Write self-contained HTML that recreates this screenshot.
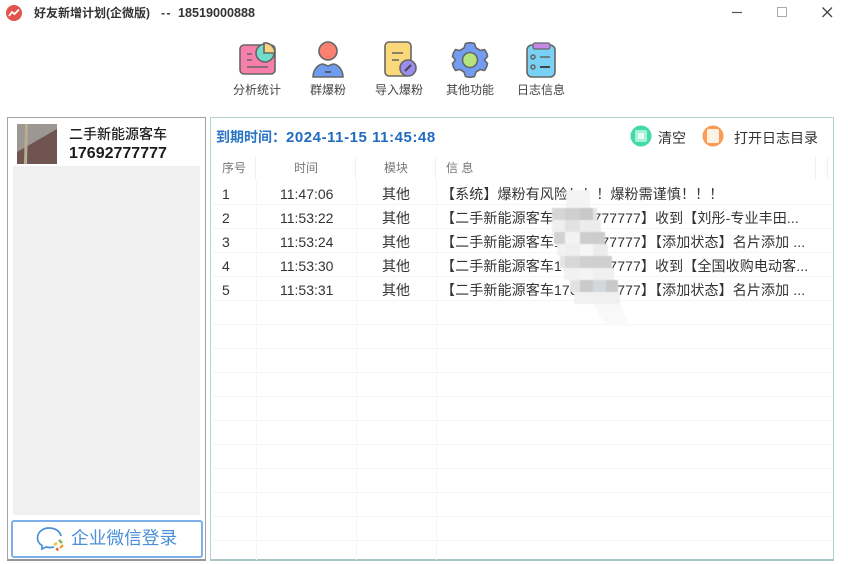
<!DOCTYPE html>
<html><head><meta charset="utf-8">
<style>
html,body{margin:0;padding:0;background:#fff}
#p{position:relative;width:848px;height:564px;overflow:hidden;background:#fff;font-family:"Liberation Sans","Noto Sans CJK SC",sans-serif;color:#333;filter:blur(.35px)}
#p div,#p svg{position:absolute}
.t{white-space:nowrap;line-height:1}
.lb{font-size:12px;color:#444;top:84px}
.h{font-size:12px;color:#777;top:162px}
.c{font-size:14px;color:#333}
.m{letter-spacing:.12px;left:441px}
.hl{background:#f0f0f0;width:1px}
.rl{background:#f4f6f6;height:1px;left:212px;width:619px}
.vl{background:#f5f6f6;width:1px;top:180px;height:380px}
</style></head><body><div id="p">

<svg style="left:5px;top:4px" width="18" height="18" viewBox="0 0 18 18"><circle cx="9" cy="9" r="8" fill="#e2534b"/><path d="M4 12l3-4 2.500 2L14 5.500" fill="none" stroke="#fff" stroke-width="1.800"/></svg>
<div class="t" style="left:34px;top:7px;font-size:12px;font-weight:bold;color:#333">好友新增计划(企微版)</div>
<div class="t" style="left:161px;top:7px;font-size:12px;font-weight:bold;letter-spacing:1.500px;color:#333">--</div>
<div class="t" style="left:178px;top:7px;font-size:12.600px;font-weight:bold;color:#333">18519000888</div>

<svg style="left:725px;top:0" width="123" height="26" viewBox="0 0 123 26"><path d="M7 12.500h10" stroke="#555" stroke-width="1.200"/><rect x="52.500" y="7.500" width="9" height="9" fill="none" stroke="#aaa" stroke-width="1"/><path d="M97.500 7.500l9.500 9.500M107 7.500l-9.500 9.500" stroke="#444" stroke-width="1.300"/></svg>

<svg style="left:238px;top:40px" width="40" height="38" viewBox="0 0 40 38"><rect x="2" y="5" width="35" height="29" rx="4" fill="#f77fa9" stroke="#666" stroke-width="1.600"/><circle cx="27" cy="13" r="9" fill="#72dccb" stroke="#666" stroke-width="1.600"/><path d="M26 3a10 10 0 0 1 11 10H26z" fill="#f9d47c" stroke="#666" stroke-width="1.600"/><path d="M9 14h5M9 20h5M9 27h21" stroke="#666" stroke-width="1.600"/></svg>
<div class="t lb" style="left:233px">分析统计</div>

<svg style="left:311px;top:40px" width="34" height="38" viewBox="0 0 34 38"><path d="M2 37c0-8 6-13 10-13l5 2 5-2c4 0 10 5 10 13z" fill="#6f9cf0" stroke="#666" stroke-width="1.600"/><circle cx="17" cy="11" r="9" fill="#fb8071" stroke="#666" stroke-width="1.600"/><path d="M14 32h6" stroke="#555" stroke-width="1.800"/></svg>
<div class="t lb" style="left:310px">群爆粉</div>

<svg style="left:383px;top:40px" width="36" height="38" viewBox="0 0 36 38"><rect x="2" y="2" width="26" height="34" rx="4" fill="#fbd97a" stroke="#666" stroke-width="1.600"/><path d="M9 13h11M9 20h7" stroke="#666" stroke-width="1.600"/><circle cx="25" cy="28" r="8" fill="#9a8cf0" stroke="#666" stroke-width="1.600"/><path d="M22 31l6-6" stroke="#444" stroke-width="2"/></svg>
<div class="t lb" style="left:375px">导入爆粉</div>

<svg style="left:451px;top:41px" width="38" height="38" viewBox="0 0 38 38"><path d="M14.500 2.500Q19 .8 23.500 2.500L25 7Q27.500 8 29 9.500L33.500 8.500Q36.500 12.500 36.500 15.500L33.500 19L36.500 22.500Q36 26 33.500 29.500L29 28.500Q27 30 25 31L23.500 35.500Q19 37 14.500 35.500L13 31Q11 30 9 28.500L4.500 29.500Q2 26 1.500 22.500L4.500 19L1.500 15.500Q2 12 4.500 8.500L9 9.500Q11 8 13 7Z" fill="#729df2" stroke="#666" stroke-width="1.600" stroke-linejoin="round"/><circle cx="19" cy="19" r="7.500" fill="#b5e37e" stroke="#666" stroke-width="1.600"/></svg>
<div class="t lb" style="left:446px">其他功能</div>

<svg style="left:525px;top:41px" width="32" height="38" viewBox="0 0 32 38"><rect x="2" y="4" width="28" height="32" rx="5" fill="#79d2f5" stroke="#666" stroke-width="1.600"/><rect x="8" y="2" width="17" height="6" rx="2" fill="#c58ae8" stroke="#666" stroke-width="1.200"/><circle cx="8" cy="16" r="2" fill="#79d2f5" stroke="#666" stroke-width="1.500"/><circle cx="8" cy="26" r="2" fill="#79d2f5" stroke="#666" stroke-width="1.500"/><path d="M15 16h10" stroke="#666" stroke-width="1.500"/><path d="M15 26h10" stroke="#444" stroke-width="2"/></svg>
<div class="t lb" style="left:517px">日志信息</div>

<div style="left:7px;top:117px;width:199px;height:444px;border:1px solid #a2a2a2;border-bottom:2px solid #959595;box-sizing:border-box;background:#fff"></div>
<div style="left:13px;top:166px;width:187px;height:349px;background:#f0f0f0"></div>
<svg style="left:17px;top:124px" width="40" height="40" viewBox="0 0 40 40"><rect width="40" height="40" fill="#9c9793"/><path d="M0 40V28L40 5V40z" fill="#6f5452"/><path d="M8 0h3l-1 40H7z" fill="#b8ad8f"/></svg>
<div class="t" style="left:69px;top:127px;font-size:14px;font-weight:500;color:#222">二手新能源客车</div>
<div class="t" style="left:69px;top:146px;font-size:16px;font-weight:bold;color:#1c1c1c">17692777777</div>

<div style="left:11px;top:520px;width:192px;height:38px;box-sizing:border-box;border:2px solid #7db0ea;border-radius:3px;background:#fff"></div>
<svg style="left:36px;top:525px" width="32" height="28" viewBox="0 0 32 28"><path d="M25 11C24 6 19 3 13 3 7 3 1.500 7 1.500 13c0 3.500 2 6 4.500 7.500V24l4-2c2 .5 5 .7 8 0" fill="none" stroke="#4a90d9" stroke-width="1.700"/><path d="M23 15l3 3" stroke="#7ab648" stroke-width="2.500"/><path d="M27 20l-3 3" stroke="#e8a23a" stroke-width="2.500"/><path d="M21 18l-3 2" stroke="#f0c040" stroke-width="2.500"/><path d="M22 25.500l-1.500-2.500" stroke="#e2673f" stroke-width="2.500"/></svg>
<div class="t" style="left:71px;top:530px;font-size:17.700px;color:#4a8fd8">企业微信登录</div>

<div style="left:210px;top:117px;width:624px;height:444px;box-sizing:border-box;border:1px solid #b5d0d2;border-bottom:2px solid #a9c6c6;background:#fff"></div>
<div class="t" style="left:216px;top:130px;font-size:14px;font-weight:bold;color:#2a75c5">到期时间：</div>
<div class="t" style="left:286px;top:130px;font-size:15px;font-weight:bold;letter-spacing:.55px;color:#1f6bc0">2024-11-15 11:45:48</div>

<svg style="left:630px;top:125px" width="22" height="22"><circle cx="11" cy="11" r="10.500" fill="#3fdca5"/><rect x="5" y="5" width="12" height="12" rx="2" fill="#a8f0d6"/><rect x="8" y="8" width="6" height="6" fill="#e6fbf3"/></svg>
<div class="t c" style="left:658px;top:131px;color:#333">清空</div>
<svg style="left:702px;top:125px" width="22" height="22"><circle cx="11" cy="11" r="10.500" fill="#fb9a55"/><rect x="5" y="4" width="12" height="14" rx="2" fill="#fff2e6"/></svg>
<div class="t c" style="left:734px;top:131px;color:#333">打开日志目录</div>

<div class="hl" style="left:255px;top:156px;height:24px"></div>
<div class="hl" style="left:355px;top:156px;height:24px"></div>
<div class="hl" style="left:435px;top:156px;height:24px"></div>
<div class="hl" style="left:815px;top:156px;height:24px"></div>
<div class="hl" style="left:827px;top:156px;height:24px"></div>
<div class="vl" style="left:256px"></div>
<div class="vl" style="left:356px"></div>
<div class="vl" style="left:436px"></div>
<div class="rl" style="top:204px"></div><div class="rl" style="top:228px"></div><div class="rl" style="top:252px"></div><div class="rl" style="top:276px"></div><div class="rl" style="top:300px"></div><div class="rl" style="top:324px"></div><div class="rl" style="top:348px"></div><div class="rl" style="top:372px"></div><div class="rl" style="top:396px"></div><div class="rl" style="top:420px"></div><div class="rl" style="top:444px"></div><div class="rl" style="top:468px"></div><div class="rl" style="top:492px"></div><div class="rl" style="top:516px"></div><div class="rl" style="top:540px"></div>

<div class="t h" style="left:222px">序号</div>
<div class="t h" style="left:294px">时间</div>
<div class="t h" style="left:384px">模块</div>
<div class="t h" style="left:446px">信 息</div>

<div class="t c" style="left:222px;top:187px">1</div><div class="t c" style="left:280px;top:187px">11:47:06</div><div class="t c" style="left:382px;top:187px">其他</div>
<div class="t c m" style="top:187px">【系统】爆粉有风险！！！爆粉需谨慎！！！</div>
<div class="t c" style="left:222px;top:211px">2</div><div class="t c" style="left:280px;top:211px">11:53:22</div><div class="t c" style="left:382px;top:211px">其他</div>
<div class="t c m" style="top:211px">【二手新能源客车17692777777】收到【刘彤-专业丰田...</div>
<div class="t c" style="left:222px;top:235px">3</div><div class="t c" style="left:280px;top:235px">11:53:24</div><div class="t c" style="left:382px;top:235px">其他</div>
<div class="t c m" style="top:235px">【二手新能源客车17692777777】【添加状态】名片添加 ...</div>
<div class="t c" style="left:222px;top:259px">4</div><div class="t c" style="left:280px;top:259px">11:53:30</div><div class="t c" style="left:382px;top:259px">其他</div>
<div class="t c m" style="top:259px">【二手新能源客车17692777777】收到【全国收购电动客...</div>
<div class="t c" style="left:222px;top:283px">5</div><div class="t c" style="left:280px;top:283px">11:53:31</div><div class="t c" style="left:382px;top:283px">其他</div>
<div class="t c m" style="top:283px">【二手新能源客车17692777777】【添加状态】名片添加 ...</div>

<svg style="left:548px;top:188px;filter:blur(.6px)" width="84" height="146" viewBox="0 0 84 146">
<rect x="18" y="2" width="24" height="18" fill="#f3f3f3"/>
<rect x="4" y="20" width="13" height="12" fill="#d6d6d6"/><rect x="17" y="20" width="15" height="12" fill="#cfcfcf"/><rect x="32" y="20" width="13" height="12" fill="#c9c9c9"/><rect x="45" y="20" width="4" height="12" fill="#e4e4e4"/>
<rect x="4" y="32" width="13" height="12" fill="#efefef"/><rect x="17" y="32" width="15" height="12" fill="#e2e2e2"/><rect x="32" y="32" width="13" height="12" fill="#ececec"/><rect x="45" y="32" width="8" height="12" fill="#ececec"/>
<rect x="6" y="44" width="11" height="12" fill="#d2d2d2"/><rect x="17" y="44" width="15" height="12" fill="#f3f3f3"/><rect x="32" y="44" width="13" height="12" fill="#cdcdcd"/><rect x="45" y="44" width="12" height="12" fill="#cccccc"/>
<rect x="9" y="56" width="8" height="12" fill="#f2f2f2"/><rect x="17" y="56" width="15" height="12" fill="#efefef"/><rect x="32" y="56" width="13" height="12" fill="#f6f6f6"/><rect x="45" y="56" width="15" height="12" fill="#ececec"/>
<rect x="12" y="68" width="5" height="12" fill="#e4e4e4"/><rect x="17" y="68" width="15" height="12" fill="#d8d8d8"/><rect x="32" y="68" width="13" height="12" fill="#d0d0d0"/><rect x="45" y="68" width="19" height="12" fill="#cfcfcf"/>
<rect x="16" y="80" width="16" height="12" fill="#f1f1f1"/><rect x="32" y="80" width="13" height="12" fill="#f4f4f4"/><rect x="45" y="80" width="21" height="12" fill="#f0f0f0"/>
<rect x="22" y="92" width="10" height="12" fill="#e2e2e2"/><rect x="32" y="92" width="13" height="12" fill="#cacaca"/><rect x="45" y="92" width="13" height="12" fill="#d3d8dc"/><rect x="58" y="92" width="12" height="12" fill="#c9c9c9"/>
<rect x="26" y="104" width="19" height="12" fill="#f1f1f1"/><rect x="45" y="104" width="27" height="12" fill="#f0f0f0"/>
<path d="M45 116h28l8 22H58z" fill="#f9f9f9"/>
</svg>
</div></body></html>
